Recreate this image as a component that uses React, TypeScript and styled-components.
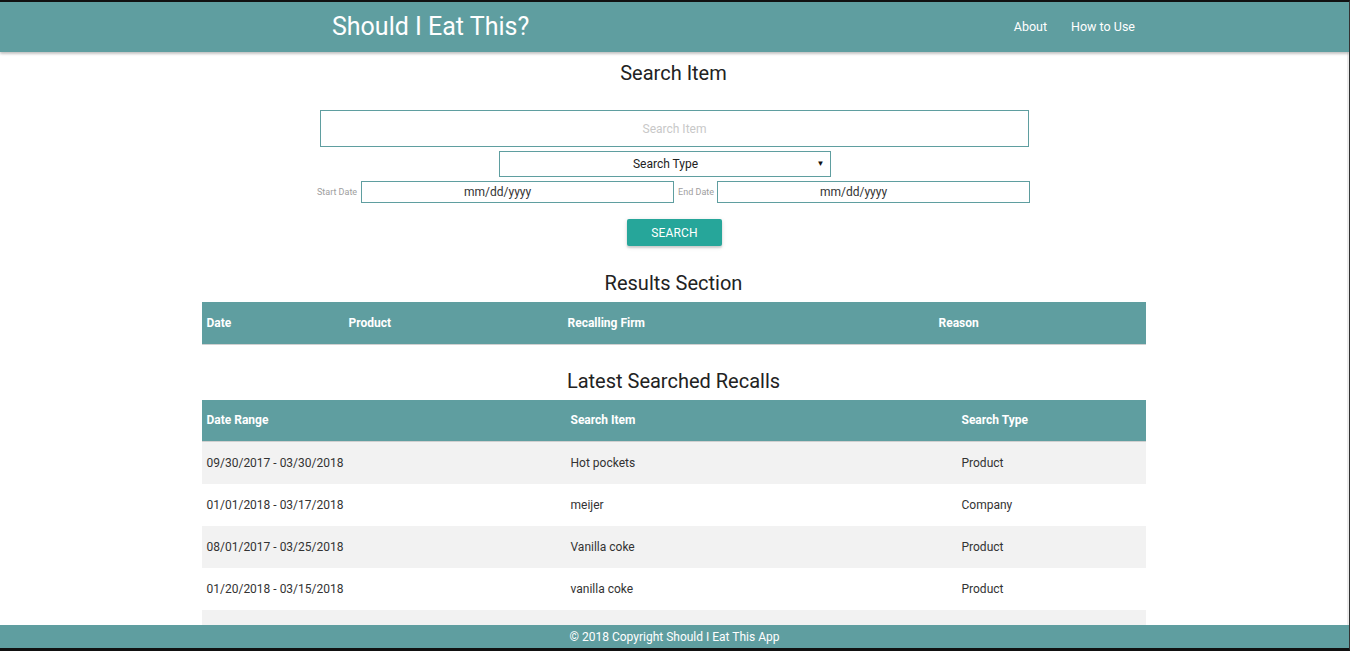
import React from "react";
import styled, { createGlobalStyle } from "styled-components";

const Global = createGlobalStyle`
  html, body { margin: 0; padding: 0; background: #fff; }
  body { font-family: Roboto, "Liberation Sans", Arial, sans-serif; color: rgba(0,0,0,0.87); }
  * { box-sizing: border-box; }
`;

const TEAL = "#5f9ea0";

const Frame = styled.div`
  width: 1350px;
  height: 651px;
  border-top: 2px solid #111;
  border-bottom: 3px solid #111;
  border-right: 1px solid #333;
  display: flex;
  flex-direction: column;
  overflow: hidden;
`;

const Header = styled.header`
  height: 50px;
  flex: none;
  background: ${TEAL};
  box-shadow: 0 2px 2px rgba(0,0,0,0.16), 0 1px 4px rgba(0,0,0,0.12);
  display: flex;
  align-items: center;
  justify-content: space-between;
  padding: 0 202px 0 332px;
  position: relative;
  z-index: 2;
`;

const Brand = styled.div`
  color: #fff;
  font-size: 25px;
  line-height: 30px;
`;

const Nav = styled.nav`
  display: flex;
`;

const NavLink = styled.a`
  color: #fff;
  font-size: 12.5px;
  padding: 0 12px;
  text-decoration: none;
  line-height: 20px;
`;

const Main = styled.main`
  flex: 1;
  min-height: 0;
  overflow: hidden;
  display: flex;
  flex-direction: column;
  align-items: center;
  border-right: 2px solid #ececec;
  & > * { flex-shrink: 0; }
`;

const Heading = styled.h2<{ $mt: number }>`
  margin: ${(p) => p.$mt}px 0 0;
  font-size: 20px;
  line-height: 24px;
  font-weight: 400;
  color: #222;
`;

const SearchInput = styled.input`
  margin: 25px 0 0 2px;
  width: 709px;
  height: 37px;
  border: 1px solid ${TEAL};
  text-align: center;
  font-family: inherit;
  font-size: 12px;
  outline: none;
  &::placeholder { color: #c8c8c8; }
`;

const SelectBox = styled.div`
  margin: 4px 18px 0 0;
  width: 332px;
  height: 26px;
  position: relative;
  display: flex;
`;

const Select = styled.select`
  flex: 1;
  appearance: none;
  -webkit-appearance: none;
  border: 1px solid ${TEAL};
  background: #fff;
  font-family: inherit;
  font-size: 12px;
  color: #222;
  text-align: center;
  text-align-last: center;
  padding: 0 0 0 2px;
  border-radius: 0;
  outline: none;
`;

const Arrow = styled.span`
  position: absolute;
  right: 6px;
  top: 8px;
  font-size: 8px;
  line-height: 10px;
  color: #111;
  pointer-events: none;
`;

const DateRow = styled.div`
  margin-top: 4px;
  display: flex;
  align-items: center;
  height: 22px;
  margin-left: -4px;
`;

const DateLabel = styled.label<{ $gap: number }>`
  font-size: 9px;
  color: #9e9e9e;
  margin-right: ${(p) => p.$gap}px;
  margin-left: 4px;
  white-space: nowrap;
`;

const DateInput = styled.input`
  width: 313px;
  height: 22px;
  border: 1px solid ${TEAL};
  font-family: inherit;
  font-size: 12px;
  color: #333;
  text-align: center;
  padding: 0 40px 0 0;
  outline: none;
`;

const Button = styled.button`
  margin: 16px 0 0 2px;
  width: 95px;
  height: 27px;
  background: #26a69a;
  color: #fff;
  border: none;
  border-radius: 2px;
  font-family: inherit;
  font-size: 12px;
  letter-spacing: 0.2px;
  box-shadow: 0 2px 2px rgba(0,0,0,0.14), 0 1px 5px rgba(0,0,0,0.12);
`;

const Table = styled.table`
  margin-top: 7px;
  width: 944px;
  border-collapse: collapse;
  font-size: 12px;
`;

const HeadRow = styled.tr`
  background: ${TEAL};
  height: 42px;
  border-bottom: 1px solid #d0d0d0;
`;

const Th = styled.th<{ $w: number }>`
  width: ${(p) => p.$w}px;
  text-align: left;
  color: #fff;
  font-weight: 700;
  padding: 0 4px 0 5px;
`;

const Row = styled.tr`
  height: 42px;
  &:nth-child(odd) { background: #f2f2f2; }
`;

const Td = styled.td`
  padding: 0 4px 0 5px;
  color: #333;
`;

const Footer = styled.footer`
  height: 23px;
  flex: none;
  background: ${TEAL};
  color: #fff;
  font-size: 12px;
  display: flex;
  align-items: center;
  justify-content: center;
`;

const recalls = [
  ["09/30/2017 - 03/30/2018", "Hot pockets", "Product"],
  ["01/01/2018 - 03/17/2018", "meijer", "Company"],
  ["08/01/2017 - 03/25/2018", "Vanilla coke", "Product"],
  ["01/20/2018 - 03/15/2018", "vanilla coke", "Product"],
  ["", "", ""],
];

export default function App() {
  return (
    <Frame>
      <Global />
      <Header>
        <Brand>Should I Eat This?</Brand>
        <Nav>
          <NavLink href="#">About</NavLink>
          <NavLink href="#">How to Use</NavLink>
        </Nav>
      </Header>
      <Main>
        <Heading $mt={9}>Search Item</Heading>
        <SearchInput placeholder="Search Item" />
        <SelectBox>
          <Select defaultValue="">
            <option value="">Search Type</option>
            <option value="product">Product</option>
            <option value="company">Company</option>
          </Select>
          <Arrow>▼</Arrow>
        </SelectBox>
        <DateRow>
          <DateLabel $gap={4}>Start Date</DateLabel>
          <DateInput defaultValue="mm/dd/yyyy" />
          <DateLabel $gap={3}>End Date</DateLabel>
          <DateInput defaultValue="mm/dd/yyyy" />
        </DateRow>
        <Button>SEARCH</Button>
        <Heading $mt={25}>Results Section</Heading>
        <Table>
          <thead>
            <HeadRow>
              <Th $w={142}>Date</Th>
              <Th $w={219}>Product</Th>
              <Th $w={371}>Recalling Firm</Th>
              <Th $w={212}>Reason</Th>
            </HeadRow>
          </thead>
        </Table>
        <Heading $mt={24}>Latest Searched Recalls</Heading>
        <Table>
          <thead>
            <HeadRow>
              <Th $w={364}>Date Range</Th>
              <Th $w={391}>Search Item</Th>
              <Th $w={189}>Search Type</Th>
            </HeadRow>
          </thead>
          <tbody>
            {recalls.map((r, i) => (
              <Row key={i}>
                <Td>{r[0]}</Td>
                <Td>{r[1]}</Td>
                <Td>{r[2]}</Td>
              </Row>
            ))}
          </tbody>
        </Table>
      </Main>
      <Footer>© 2018 Copyright Should I Eat This App</Footer>
    </Frame>
  );
}
